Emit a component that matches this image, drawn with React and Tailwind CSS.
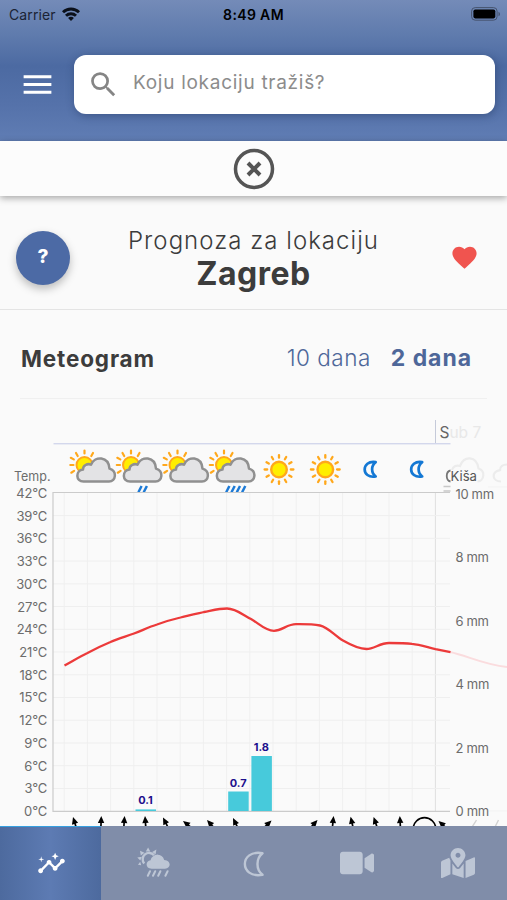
import { MdFavorite, MdInsights, MdMenu, MdSearch } from "react-icons/md";
import { FaMapMarkedAlt, FaVideo } from "react-icons/fa";

const hours = Array.from({ length: 17 }, (_, i) => 64.2 + i * 23.2);
const temps = [42, 39, 36, 33, 30, 27, 24, 21, 18, 15, 12, 9, 6, 3, 0];
const rain = [10, 8, 6, 4, 2, 0];

const bars = [
  { x: 135.5, h: 1.6, label: "0.1" },
  { x: 228.2, h: 19.5, label: "0.7" },
  { x: 251.4, h: 55, label: "1.8" },
];

// tip x, tip y, rotation
const wind = [
  [73, 817, -17],
  [101.3, 816, 2],
  [124.6, 816, 4],
  [145, 816, -4],
  [163, 817.5, -27],
  [183, 821, -52],
  [207, 820, -42],
  [233, 818, -26],
  [271.5, 820.5, 46],
  [317.5, 820, 42],
  [333.6, 816, 6],
  [350.6, 816.8, -13],
  [373.6, 817, -19],
  [399.8, 816, -3],
  [438.5, 821, -48],
];

function Wifi() {
  return (
    <svg width="18" height="14" viewBox="0 0 18 14" fill="none" stroke="#0b101a" strokeWidth="2.9">
      <path d="M1 5.2a11.6 11.6 0 0 1 16 0" />
      <path d="M4 8.7a7.2 7.2 0 0 1 10 0" />
      <path d="M9 14 6.1 11a4 4 0 0 1 5.8 0Z" fill="#0b101a" stroke="none" />
    </svg>
  );
}

function Battery() {
  return (
    <svg width="30" height="14" viewBox="0 0 30 14">
      <rect x="0.6" y="0.6" width="25.5" height="12.6" rx="3.6" fill="none" stroke="#46536e" />
      <rect x="2.4" y="2.4" width="21.9" height="9" rx="1.8" fill="#000" />
      <path d="M27.5 4.7c2 .9 2 3.7 0 4.6Z" fill="#46536e" />
    </svg>
  );
}

function CloudSun({ x, drops = 0 }) {
  return (
    <g transform={`translate(${x} 449)`}>
      <circle cx="15" cy="16" r="8" fill="#ffee00" stroke="#ffa81c" strokeWidth="2" />
      <g stroke="#ffa81c" strokeWidth="2.2" strokeLinecap="round">
        <path d="M15 1.5v3M6.5 4l1.7 3M23.5 4l-1.7 3M1.3 8.8l3 1.6M.8 16h3.2M1.8 23.7l2.8-1.8" />
      </g>
      <path
        d="M14 32.5C6 32.5 5.8 21.5 13.5 20.6C13.2 16.6 18 14 21.5 15.7C25.5 6.5 39 7.3 40 19.6C48 22 46.5 32.5 39.5 32.5Z"
        fill="#e3e3e5"
        stroke="#909090"
        strokeWidth="2.5"
        strokeLinejoin="round"
      />
      {Array.from({ length: drops }, (_, i) => (
        <path
          key={i}
          d={`M${27.6 - drops * 2.6 + i * 5.3} 43.2l3.2-6.2`}
          stroke="#1c7ad6"
          strokeWidth="2.5"
        />
      ))}
    </g>
  );
}

function Sun({ x }) {
  return (
    <g transform={`translate(${x} 469.5)`}>
      <circle r="7.8" fill="#ffee00" stroke="#ffa81c" strokeWidth="2.4" />
      {Array.from({ length: 12 }, (_, i) => (
        <path
          key={i}
          d="M0-11.8v-2.6"
          stroke="#ffa81c"
          strokeWidth="2.3"
          strokeLinecap="round"
          transform={`rotate(${i * 30})`}
        />
      ))}
    </g>
  );
}

function Moon({ x }) {
  return (
    <path
      transform={`translate(${x} 469.3)`}
      d="M6.2-7.2C-8.5-9.5-8.5 9.8 6.2 7.2C1.4 3.5 1.4-3.5 6.2-7.2Z"
      fill="none"
      stroke="#1478d4"
      strokeWidth="2.7"
      strokeLinejoin="round"
    />
  );
}

function Meteogram() {
  return (
    <svg width="507" height="427" viewBox="0 399 507 427" className="block font-[Inter,sans-serif]">
      {/* day header */}
      <path d="M53.5 443.5H450" stroke="none" />
      <rect x="53.5" y="443" width="397" height="1.4" fill="#d3d7ec" />
      <path d="M435.5 420v23" stroke="#c5cad9" />
      <text x="439.5" y="438" fontSize="15.5" fill="#666">
        S<tspan fill="#e8e8e8">ub 7</tspan>
      </text>

      {/* symbols */}
      <CloudSun x={69.5} />
      <CloudSun x={116} drops={2} />
      <CloudSun x={162.5} />
      <CloudSun x={209} drops={4} />
      <Sun x={279} />
      <Sun x={325.3} />
      <Moon x={369.5} />
      <Moon x={416} />
      <path
        d="M455 481.5M452 470C453 467 456 464.5 460 466C464 455.500 476.500 455.500 478.500 468.500C486 471 484 481.500 477.500 481.500M501 481.500C492 481.500 491 472 500 470.200C500 466.500 503 464.500 507 464.500"
        fill="none"
        stroke="#ececec"
        strokeWidth="2.2"
      />
      <path d="M450.5 470.5c-5 1-5 10 0 11" fill="none" stroke="#777" strokeWidth="1.8" />
      <path d="M443.5 486.5h7M443.5 491h7" stroke="#c8c8c8" strokeWidth="1.3" />
      <path d="M488 487h19M488 811h19" stroke="#f3f3f3" />

      {/* grid */}
      {hours.map((x, i) => (
        <path key={x} d={`M${x} 493V811`} stroke={i === 16 ? "#dfdfdf" : "#f0f0f0"} />
      ))}
      {temps.slice(1, -1).map((t) => (
        <path key={t} d={`M53 ${811.2 - t * 7.58}H450`} stroke="#efefef" />
      ))}
      <path d="M450 492.5H53V811.3H450" fill="none" stroke="#cbcbcb" strokeWidth="1.2" />

      {/* axes */}
      <g fill="#6c6c6c" fontSize="13">
        <text x="14" y="481" fontSize="13.5" textLength="36.5" lengthAdjust="spacingAndGlyphs">Temp.</text>
        <text x="450.5" y="481" fontSize="13.5" fill="#555" textLength="26.5" lengthAdjust="spacingAndGlyphs">Kiša</text>
        {temps.map((t) => (
          <text key={t} x="47" y={816 - t * 7.57} textAnchor="end" letterSpacing="-0.2">
            {t}°C
          </text>
        ))}
        {rain.map((r) => (
          <text key={r} x="455.5" y={816 - r * 31.75} letterSpacing="-0.35">
            {r} mm
          </text>
        ))}
      </g>

      {/* rain */}
      {bars.map((b) => (
        <g key={b.label}>
          <rect x={b.x} y={811 - b.h} width="20.5" height={b.h} fill="#47cadb" />
          <text x={b.x + 10} y={806 - b.h} fontSize="11" fontWeight="700" fill="#1d108c" textAnchor="middle">
            {b.label}
          </text>
        </g>
      ))}

      {/* temperature */}
      <path
        d="M450 652C467 655.5 483 664.5 507 667"
        fill="none"
        stroke="#fadcde"
        strokeWidth="2"
      />
      <path
        d="M64.5 665.5C72 661.5 79 657 87.5 653C95 649 102 645.5 110.5 642C118 638.5 126 636.5 134 633.5C142 630.5 149 627 157 624.5C165 621.5 172 619.5 180.5 617.5C188 615.5 196 613.8 204 612C212 610.5 219 608.5 227 608.5C236 608.5 243 615 251 619C259 623.5 265 630.8 274 630.8C282 630.8 287 624.2 296 624.2C304 624.2 312 624 320 625.5C328 627 335 636 343 640.5C350 644.5 358 649 366.5 649C374 649 380 643 389 643C397 643 405 643 412 643.8C420 644.5 428 647.5 435.5 649.2L450.5 652.2"
        fill="none"
        stroke="#ec3a3a"
        strokeWidth="2.3"
      />

      {/* wind */}
      {wind.map(([x, y, a]) => (
        <g key={x} transform={`translate(${x} ${y}) rotate(${a})`}>
          <path d="M0 0 3.2 7H-3.2Z" fill="#000" />
          <path d="M0 5v14" stroke="#000" strokeWidth="1.7" />
        </g>
      ))}
      <circle cx="424.5" cy="829" r="11.3" fill="none" stroke="#000" strokeWidth="1.7" />
      <path d="M476.5 820l-5 8M498.5 820l-4 8" stroke="#d2d2d2" strokeWidth="1.4" />
    </svg>
  );
}

function SunRain() {
  return (
    <svg width="34" height="32" viewBox="0 0 34 32" fill="none" stroke="currentColor">
      <path d="M7.2 16.5A6 6 0 1 1 17 8.2" strokeWidth="2.4" />
      <g fill="currentColor" stroke="none">
        <path d="m8.8 4.4 2.3-4 2.2 4ZM15.2 5.1l4.2-2.5-.8 4.8ZM3.8 8.4 3 3.7l4.5 2ZM3.3 13.6l-3-3 4.6-.9ZM4.2 18.3l-3.2-.6 2.2-3ZM18.2 8.4l2.9-1-.8 1.2Z" />
        <path d="M14.6 21.7c-6.3 0-6.6-7.5-1-8.4 1.6-7 11.6-7.4 13.6-.4 7.2.2 7.1 8.8.8 8.8Z" />
      </g>
      <path
        d="m13 24.2-2.2 4.6M18.2 24.2l-2.2 4.6M23.4 24.2l-2.2 4.6M30.6 24.2l-2.2 4.6"
        strokeWidth="2"
        strokeLinecap="round"
      />
    </svg>
  );
}

function MoonOutline() {
  return (
    <svg width="22" height="26" viewBox="0 0 22 26" fill="none" stroke="currentColor">
      <path
        d="M19.5 2.2C-4-2-4 28 19.5 23.8C12.8 18.5 12.8 7.5 19.5 2.2Z"
        strokeWidth="2.4"
        strokeLinejoin="round"
      />
    </svg>
  );
}

export default function App() {
  return (
    <div className="flex h-[900px] w-[507px] flex-col overflow-hidden bg-[#fafafa] font-[Inter,sans-serif] text-[#3c3c3c]">
      <header className="h-[141px] shrink-0 bg-[linear-gradient(#748bb8_0px,#5f7bad_35px,#4c6aa2_66px,#5572aa_105px,#607db4_141px)]">
        <div className="grid h-7 grid-cols-3 items-center pl-[9px] pr-[6px] text-black">
          <div className="flex items-center gap-1.5 text-[14px] text-[#1b2334]">
            <span className="tracking-[0.1px]">Carrier</span>
            <Wifi />
          </div>
          <span className="-ml-[3px] text-center text-[14px] font-semibold tracking-[0.35px]">8:49 AM</span>
          <div className="flex justify-end">
            <Battery />
          </div>
        </div>
        <div className="flex items-center pt-[26.5px] pl-[19px]">
          <MdMenu className="size-[37px] text-white" />
          <div className="ml-[18px] flex h-[59px] w-[421px] items-center rounded-[12px] bg-white shadow-[1px_2px_8px_rgba(30,50,90,0.45)]">
            <MdSearch className="ml-[13px] size-[33px] text-[#858585]" />
            <span className="ml-[13px] -mt-[2px] text-[19px] tracking-[0.72px] text-[#8c8c8c]">
              Koju lokaciju tražiš?
            </span>
          </div>
        </div>
      </header>

      <div className="z-10 flex h-[55px] shrink-0 items-center justify-center bg-[#fcfcfc] shadow-[0_2px_7px_rgba(0,0,0,0.35)]">
        <svg width="42" height="42" viewBox="0 0 42 42" fill="none" stroke="#555">
          <circle cx="21" cy="21" r="18.5" strokeWidth="3.5" />
          <path d="m15 15 12 12M27 15 15 27" strokeWidth="4" />
        </svg>
      </div>

      <section className="flex h-[114px] shrink-0 items-center border-b border-[#e4e4e4] pt-2.5 pl-4">
        <button className="flex size-[54px] items-center justify-center rounded-full bg-[#4c6aa5] text-[19px] font-extrabold text-white shadow-[0_4px_8px_rgba(0,0,0,0.25)]">
          ?
        </button>
        <div className="w-[367px] text-center">
          <h2 className="text-[24px] leading-[32px] font-light tracking-[1.03px]">Prognoza za lokaciju</h2>
          <h1 className="text-[32px] leading-[34px] font-bold tracking-[0.5px]">Zagreb</h1>
        </div>
        <MdFavorite className="ml-[13px] size-[29px] text-[#f0544f]" />
      </section>

      <section className="mx-5 flex h-[89px] shrink-0 items-center border-b border-[#f0f0f0] pt-[9px]">
        <h3 className="ml-px text-[22.5px] font-bold tracking-[0.85px]">Meteogram</h3>
        <div className="mr-[15px] ml-auto flex gap-5 text-[22.5px] text-[#4e6799]">
          <span className="font-light tracking-[0.5px]">10 dana</span>
          <span className="text-[23px] font-bold tracking-[0.95px]">2 dana</span>
        </div>
      </section>

      <Meteogram />

      <nav className="grid h-[74px] shrink-0 grid-cols-5 bg-[#808da9] text-[#bdc6d5]">
        <a className="flex items-center justify-center border-t border-[#36a0e0] bg-[linear-gradient(90deg,#4d6a9e,#5d7bb3_50%,#4d6a9e)] pl-0.5 text-white">
          <MdInsights className="size-[29px]" />
        </a>
        <a className="flex items-center justify-center pl-1">
          <SunRain />
        </a>
        <a className="flex items-center justify-center pt-0.5 pl-0.5">
          <MoonOutline />
        </a>
        <a className="flex items-center justify-center pl-1">
          <FaVideo className="size-[34px]" />
        </a>
        <a className="flex items-center justify-center pl-1">
          <FaMapMarkedAlt className="size-[34px]" />
        </a>
      </nav>
    </div>
  );
}
